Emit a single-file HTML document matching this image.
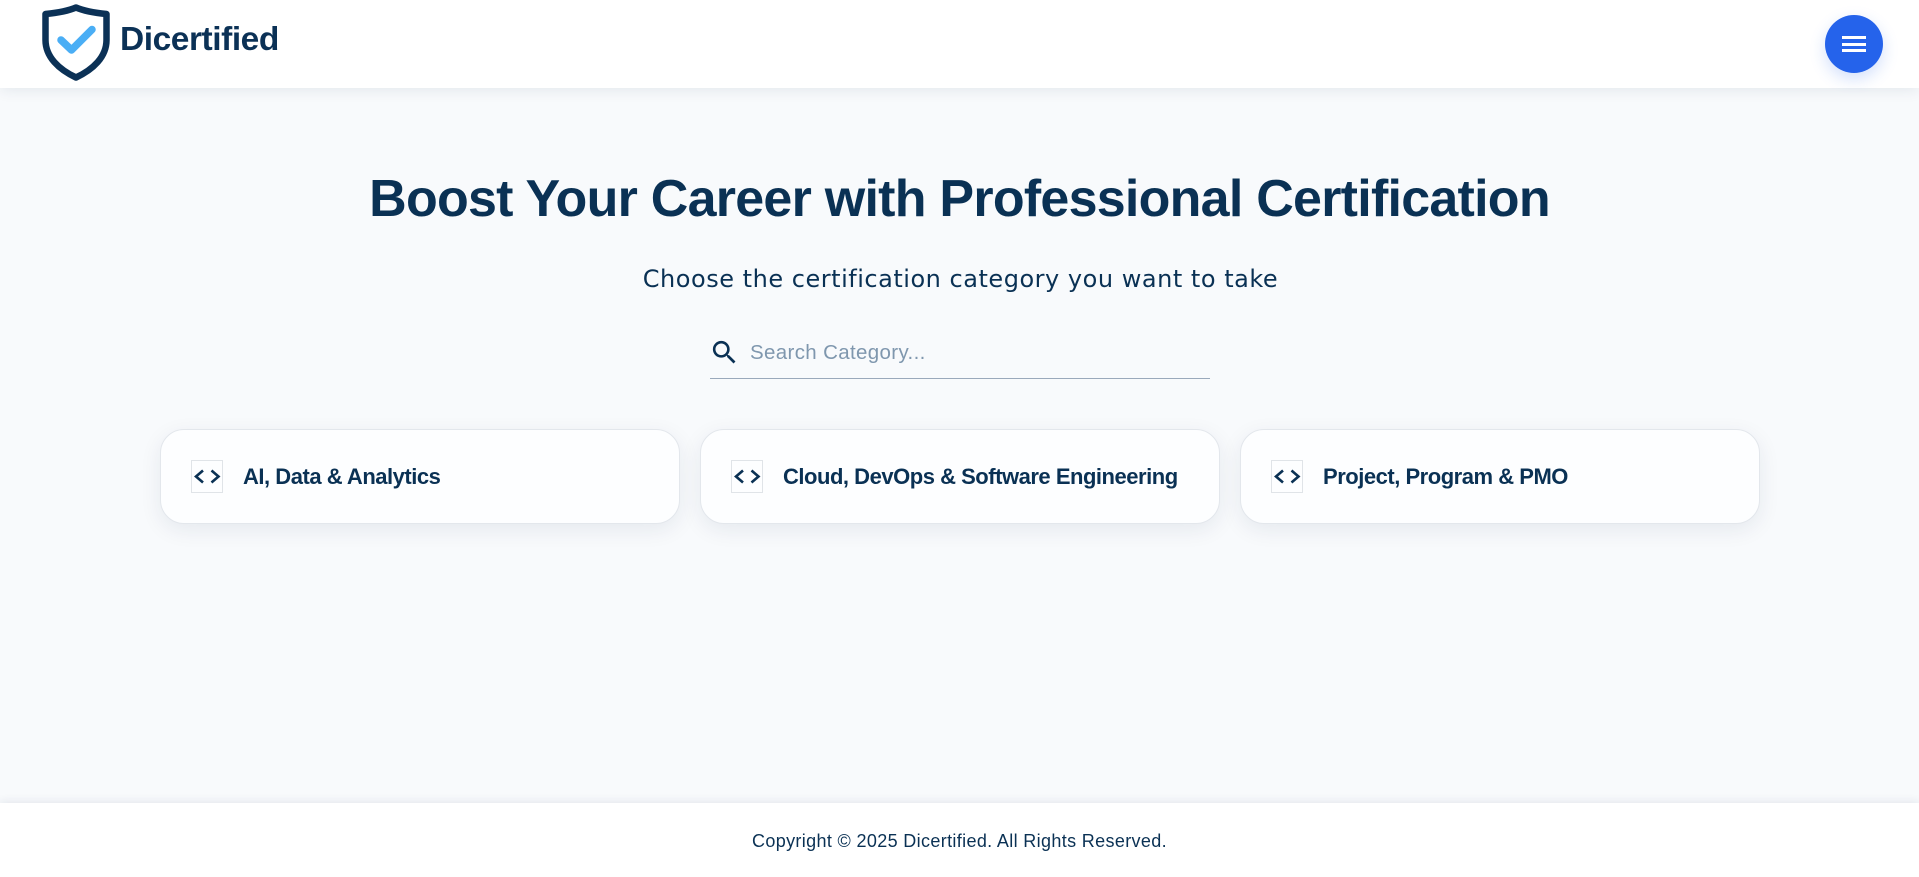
<!DOCTYPE html>
<html lang="en"><head><meta charset="utf-8"><title>Dicertified</title>
<style>
*{box-sizing:border-box;margin:0;padding:0}
html,body{width:1919px;height:877px;overflow:hidden;background:#f8fafc;font-family:"Liberation Sans",sans-serif;color:#0a3154}
.abs{position:absolute;white-space:nowrap}
header{position:absolute;left:0;top:0;width:1919px;height:88px;background:#fff;box-shadow:0 2px 14px rgba(10,40,80,.09)}
.menu{position:absolute;left:1825px;top:15px;width:58px;height:58px;border-radius:50%;background:#2563eb;box-shadow:0 6px 16px rgba(37,99,235,.2)}
.menu i{position:absolute;left:17px;width:24px;height:3px;background:#fff}
h1{left:0;width:1919px;top:167px;text-align:center;font-size:52px;line-height:64px;font-weight:700;letter-spacing:-.75px}
.sub{left:1px;width:1919px;top:262px;text-align:center;font-family:"DejaVu Sans",sans-serif;font-size:24px;line-height:34px;letter-spacing:.52px;color:#0a3154}
.search{position:absolute;left:710px;top:337px;width:500px;height:42px;border-bottom:1px solid #9aa9bb}
.ph{left:750px;top:340px;font-size:20.500px;line-height:26px;color:#7f97ae;letter-spacing:.35px}
.card{position:absolute;top:429px;width:520px;height:95px;background:#fdfeff;border:1px solid #e3e7ec;border-radius:24px;box-shadow:0 6px 22px rgba(10,40,80,.08)}
.ic{position:absolute;left:30px;top:30px;width:32px;height:33px;border:1px solid #e0e4e8}
.card b{position:absolute;left:82px;top:32px;font-size:22px;line-height:30px;white-space:nowrap;font-weight:700;letter-spacing:-.48px}
footer{position:absolute;left:0;top:803px;width:1919px;height:74px;background:#fff;box-shadow:0 -2px 8px rgba(10,40,80,.08)}
.copy{left:0;width:1919px;top:829px;text-align:center;font-size:18px;line-height:24px;letter-spacing:.35px;color:#0a3154}
</style></head><body>
<header>
<svg class="abs" style="left:40px;top:2px" width="72" height="80" viewBox="0 0 72 80"><path d="M36 5.500 C28 9 16 11 5.500 12 V38 C5.500 55 19 67.500 36 75.500 C53 67.500 66.500 55 66.500 38 V12 C56 11 44 9 36 5.500Z" fill="#fff" stroke="#0b3156" stroke-width="6.500" stroke-linejoin="round"/><path d="M21 38 L31.500 48 L52 27.500" fill="none" stroke="#4aaef5" stroke-width="7.500" stroke-linecap="round" stroke-linejoin="round"/></svg>
<span class="abs" style="left:120px;top:20px;font-size:33.500px;line-height:40px;font-weight:700;color:#0b3156;letter-spacing:-.45px">Dicertified</span>
<div class="menu"><i style="top:21px"></i><i style="top:28px"></i><i style="top:34px"></i></div>
</header>
<h1 class="abs">Boost Your Career with Professional Certification</h1>
<div class="abs sub">Choose the certification category you want to take</div>
<div class="search"></div>
<svg class="abs" style="left:709px;top:337px" width="31" height="31" viewBox="0 0 24 24"><path fill="#0a3154" d="M15.500 14h-.79l-.28-.27A6.470 6.470 0 0 0 16 9.500 6.500 6.500 0 1 0 9.500 16c1.610 0 3.090-.59 4.230-1.570l.27.28v.79l5 4.990L20.490 19l-4.990-5zm-6 0C7.010 14 5 11.990 5 9.500S7.010 5 9.500 5 14 7.010 14 9.500 11.990 14 9.500 14z"/></svg>
<div class="abs ph">Search Category...</div>
<div class="card" style="left:160px"><div class="ic"><svg width="30" height="31" viewBox="0 0 30 31"><path d="M11 9.500 L4 15.500 L11 21.500 M19.500 9.500 L26.500 15.500 L19.500 21.500" fill="none" stroke="#0a3154" stroke-width="2.600"/></svg></div><b>AI, Data &amp; Analytics</b></div>
<div class="card" style="left:700px"><div class="ic"><svg width="30" height="31" viewBox="0 0 30 31"><path d="M11 9.500 L4 15.500 L11 21.500 M19.500 9.500 L26.500 15.500 L19.500 21.500" fill="none" stroke="#0a3154" stroke-width="2.600"/></svg></div><b>Cloud, DevOps &amp; Software Engineering</b></div>
<div class="card" style="left:1240px"><div class="ic"><svg width="30" height="31" viewBox="0 0 30 31"><path d="M11 9.500 L4 15.500 L11 21.500 M19.500 9.500 L26.500 15.500 L19.500 21.500" fill="none" stroke="#0a3154" stroke-width="2.600"/></svg></div><b>Project, Program &amp; PMO</b></div>
<footer></footer>
<div class="abs copy">Copyright © 2025 Dicertified. All Rights Reserved.</div>
</body></html>
